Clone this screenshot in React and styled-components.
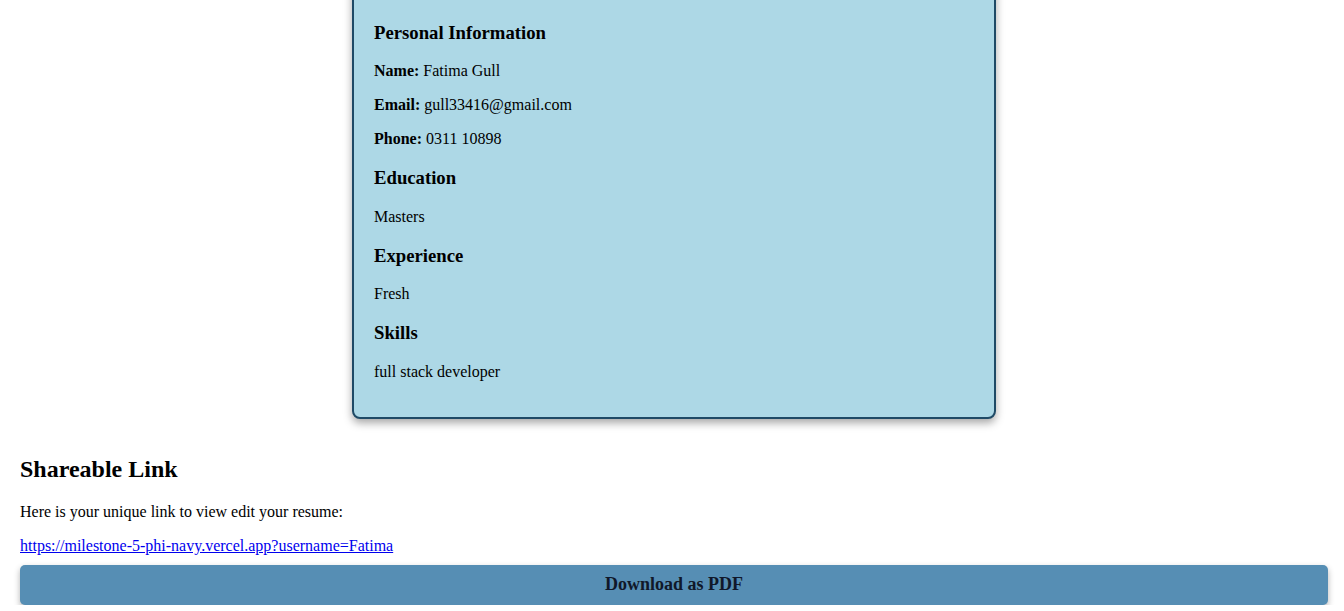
import React from "react";
import styled, { createGlobalStyle } from "styled-components";

const GlobalStyle = createGlobalStyle`
  body {
    margin: 0;
    background: #ffffff;
    font-family: "Liberation Serif", "Times New Roman", serif;
    color: #000;
  }
`;

const Page = styled.div`
  padding: 0 16px 0 20px;
  overflow: hidden;
`;

const ResumeCard = styled.div`
  max-width: 600px;
  margin: -19px auto 0;
  padding: 20px;
  background: #add8e6;
  border: 2px solid #1f4a66;
  border-radius: 8px;
  box-shadow: 0 4px 8px rgba(0, 0, 0, 0.35);
  overflow: hidden;
`;

const SectionTitle = styled.h3`
  font-size: 18.72px;
  margin: 18.72px 0;
`;

const Line = styled.p`
  font-size: 16px;
  margin: 16px 0;
`;

const ShareSection = styled.section`
  margin-top: 37px;
`;

const ShareTitle = styled.h2`
  font-size: 24px;
  margin: 0 0 19.92px;
`;

const Link = styled.a`
  color: #0000ee;
  text-decoration: underline;
`;

const DownloadButton = styled.button`
  display: block;
  width: 100%;
  height: 40px;
  margin-top: 10px;
  border: none;
  border-radius: 5px;
  background: #568eb4;
  color: #10182a;
  font-family: "Liberation Serif", "Times New Roman", serif;
  font-size: 18px;
  font-weight: bold;
  box-shadow: 0 3px 6px rgba(0, 0, 0, 0.3);
  cursor: pointer;
`;

const info = [
  ["Name:", "Fatima Gull"],
  ["Email:", "gull33416@gmail.com"],
  ["Phone:", "0311 10898"],
];

const sections = [
  ["Education", "Masters"],
  ["Experience", "Fresh"],
  ["Skills", "full stack developer"],
];

export default function App() {
  return (
    <>
      <GlobalStyle />
      <Page>
        <ResumeCard>
          <SectionTitle>Personal Information</SectionTitle>
          {info.map(([label, value]) => (
            <Line key={label}>
              <b>{label}</b> {value}
            </Line>
          ))}
          {sections.map(([title, text]) => (
            <React.Fragment key={title}>
              <SectionTitle>{title}</SectionTitle>
              <Line>{text}</Line>
            </React.Fragment>
          ))}
        </ResumeCard>

        <ShareSection>
          <ShareTitle>Shareable Link</ShareTitle>
          <Line>Here is your unique link to view edit your resume:</Line>
          <Line style={{ marginBottom: 0 }}>
            <Link href="#">https://milestone-5-phi-navy.vercel.app?username=Fatima</Link>
          </Line>
          <DownloadButton>Download as PDF</DownloadButton>
        </ShareSection>
      </Page>
    </>
  );
}
